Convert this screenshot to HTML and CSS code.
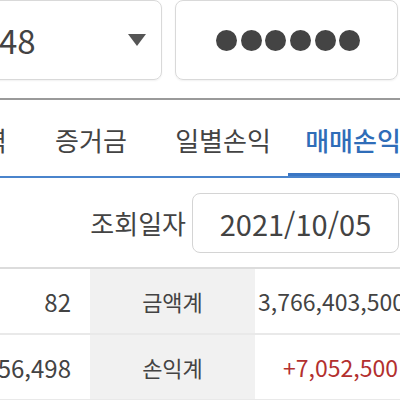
FILE: index.html
```html
<!DOCTYPE html>
<html lang="ko">
<head>
<meta charset="utf-8">
<link rel="stylesheet" href="styles.css">
</head>
<body>
<div class="screen">
  <div class="inputs">
    <div class="field account">
      <span class="value">48</span>
      <span class="caret"></span>
    </div>
    <div class="field password">
      <span class="dot"></span><span class="dot"></span><span class="dot"></span><span class="dot"></span><span class="dot"></span><span class="dot"></span>
    </div>
  </div>
  <div class="tabs">
    <div class="tab">거래내역</div>
    <div class="tab wide">증거금</div>
    <div class="tab">일별손익</div>
    <div class="tab active">매매손익</div>
  </div>
  <div class="filter">
    <span class="filter-label">조회일자</span>
    <div class="date">2021/10/05</div>
  </div>
  <div class="summary">
    <div class="row">
      <div class="cell num">82</div>
      <div class="cell head">금액계</div>
      <div class="cell amount">3,766,403,500</div>
    </div>
    <div class="row">
      <div class="cell num">56,498</div>
      <div class="cell head">손익계</div>
      <div class="cell amount profit">+7,052,500</div>
    </div>
  </div>
</div>
</body>
</html>
```
FILE: styles.css
```css
* { box-sizing: border-box; }
html, body { margin: 0; padding: 0; }
body {
  width: 400px;
  height: 400px;
  overflow: hidden;
  background: #fff;
  font-family: "Noto Sans CJK KR", "Noto Sans", sans-serif;
  color: #434343;
}
.screen { width: 400px; }

.inputs {
  display: flex;
  gap: 13px;
  height: 100px;
  border-bottom: 2px solid #9a9a9a;
}
.field {
  height: 80px;
  border: 1px solid #d9d9d9;
  border-radius: 8px;
  display: flex;
  align-items: center;
  box-shadow: 0 1px 2px rgba(0,0,0,0.06);
}
.account {
  width: 202px;
  margin-left: -40px;
  padding-left: 38px;
  padding-right: 15px;
}
.value {
  font-size: 33px;
  line-height: 1;
}
.caret {
  margin-left: auto;
  width: 0;
  height: 0;
  border-left: 9px solid transparent;
  border-right: 9px solid transparent;
  border-top: 12px solid #555;
}
.password {
  width: 223px;
  padding-left: 40px;
  gap: 3.7px;
}
.dot {
  width: 21px;
  height: 21px;
  border-radius: 50%;
  background: #444;
}

.tabs {
  display: flex;
  margin-left: -106px;
  height: 78px;
  border-bottom: 2px solid #4a84cc;
}
.tab {
  flex: 0 0 130px;
  display: flex;
  align-items: center;
  justify-content: center;
  font-size: 26px;
  padding-top: 2px;
}
.tab.wide { flex-basis: 134px; }
.tab.active {
  color: #2f6db8;
  font-weight: 500;
  border-bottom: 3px solid #3a76c4;
  padding-top: 5px;
}

.filter {
  height: 91px;
  display: flex;
  align-items: center;
  justify-content: flex-end;
  border-bottom: 2px solid #dcdcdc;
  padding-right: 1px;
}
.filter-label {
  font-size: 26px;
  margin-right: 6px;
}
.date {
  width: 207px;
  height: 60px;
  border: 1px solid #d4d4d4;
  border-radius: 8px;
  display: flex;
  align-items: center;
  justify-content: center;
  font-size: 29px;
}

.summary { width: 440px; }
.row {
  display: flex;
  height: 66px;
  border-bottom: 2px solid #e9e9e9;
}
.cell {
  display: flex;
  align-items: center;
}
.num {
  width: 90px;
  justify-content: flex-end;
  padding-right: 19px;
  font-size: 24px;
}
.head {
  width: 165px;
  background: #f1f1f1;
  justify-content: center;
  font-size: 22px;
}
.amount {
  flex: 1;
  justify-content: flex-end;
  padding-right: 35px;
  font-size: 23px;
}
.profit {
  color: #b3302e;
  padding-right: 42px;
}
```
